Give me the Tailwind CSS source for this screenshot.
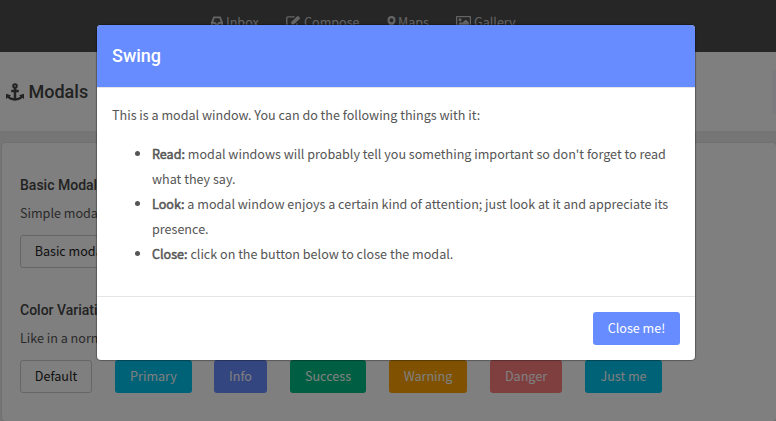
<!DOCTYPE html>
<html lang="en">
<head>
<meta charset="utf-8">
<title>Modals</title>
<script src="https://cdn.jsdelivr.net/npm/@tailwindcss/browser@4"></script>
</head>
<body class="relative h-[421px] w-[776px] overflow-hidden bg-[#ebebeb] font-['Noto_Sans_CJK_SC',sans-serif] text-[12.58px] leading-[25px] text-[#555]">
<nav class="flex h-[52px] bg-[#4c4c4c] pl-[211px] pt-[9px] text-white/70">
  <a class="flex w-[75px] gap-[3px]"><svg class="mt-[6px] h-[13px] w-[12px]" viewBox="0 0 13 13" fill="none" stroke="currentColor" stroke-width="2"><path d="M1 8 3.2 2h6.6L12 8v3.5H1V8h3.2l1 1.8h2.6l1-1.8H12"/></svg>Inbox</a>
  <a class="flex w-[101px] gap-[3px]"><svg class="mt-[6px] h-[13px] w-[15px]" viewBox="0 0 15 13" fill="none" stroke="currentColor" stroke-width="1.3"><path d="M8.5 1.8H2Q.8 1.8.8 3v8q0 1.2 1.2 1.2h7.5q1.2 0 1.2-1.2V8.5"/><path d="M5.2 9.6V7l6.6-6.3 2.5 2.5L7.8 9.6z" fill="currentColor" stroke="none"/></svg>Compose</a>
  <a class="flex w-[69px] gap-[2px]"><svg class="mt-[7px] h-[13px] w-[9px]" viewBox="0 0 9 13" fill="currentColor"><path fill-rule="evenodd" d="M4.5 0A4 4 0 0 0 .5 4c0 2 1 3 4 9 3-6 4-7 4-9a4 4 0 0 0-4-4m0 2.2a2 2 0 1 1 0 4 2 2 0 0 1 0-4"/></svg>Maps</a>
  <a class="flex gap-[3px]"><svg class="mt-[7px] h-[12px] w-[15px]" viewBox="0 0 15 12" fill="currentColor"><path fill-rule="evenodd" d="M1 0h13q1 0 1 1v10q0 1-1 1H1q-1 0-1-1V1q0-1 1-1m.2 1.2v9.6h12.6V1.2z"/><circle cx="4" cy="3.8" r="1.5"/><path d="M2.4 9.8V8l2.3-2.2L6 7l3.8-3.6 3 3v3.4z"/></svg>Gallery</a>
</nav>
<header class="flex h-[79px] items-center justify-between bg-white">
  <h1 class="ml-[6px] flex items-center gap-[4.5px] font-[Roboto,sans-serif] text-[18px] font-medium text-[#444]"><svg class="h-[18px] w-[18px]" viewBox="0 0 18 18" fill="none" stroke="currentColor" stroke-width="2.5"><circle cx="9" cy="3" r="1.8" stroke-width="2"/><path d="M9 5v11M5.2 8h7.6M2 13c1.2 2.4 3.5 3.4 7 3.4s5.8-1 7-3.4"/><path d="M0 10.8v5.2l5-3.8zM18 10.8v5.2l-5-3.8z" fill="currentColor" stroke="none"/></svg>Modals</h1>
  <div class="h-[46px] w-[4px] rounded-l bg-[#f6f5fb]"></div>
</header>
<main class="ml-[2px] mt-[12px] h-[278px] rounded-[3px] bg-white pl-[18px] pt-[30px] shadow-[0_0_1px_#999]">
  <h2 class="font-[Roboto,sans-serif] text-[14px] font-medium text-[#444]">Basic Modals</h2>
  <p class="mt-[2px]">Simple modals, no fancy colors</p>
  <button class="mt-[10px] block h-[33px] w-[101px] rounded-[3px] border border-[#ccc] pb-[2px] text-[#222]">Basic modal</button>
  <h2 class="mt-[30px] font-[Roboto,sans-serif] text-[14px] font-medium text-[#444]">Color Variations</h2>
  <p class="mt-[2px]">Like in a normal page</p>
  <div class="mt-[10px] flex h-[33px] text-white">
    <button class="mr-[23px] w-[72px] rounded-[3px] border border-[#ccc] pb-[2px] text-[#222]">Default</button>
    <button class="mr-[22px] w-[77px] rounded-[3px] bg-[#00c4ee] pb-[2px]">Primary</button>
    <button class="mr-[23px] w-[53px] rounded-[3px] bg-[#678cff] pb-[2px]">Info</button>
    <button class="mr-[23px] w-[76px] rounded-[3px] bg-[#00bf86] pb-[2px]">Success</button>
    <button class="mr-[23px] w-[78px] rounded-[3px] bg-[#ffa200] pb-[2px]">Warning</button>
    <button class="mr-[23px] w-[72px] rounded-[3px] bg-[#ff7e7e] pb-[2px]">Danger</button>
    <button class="w-[77px] rounded-[3px] bg-[#00c4ee] pb-[2px]">Just me</button>
  </div>
</main>
<div class="absolute inset-0 bg-black/50 pl-[97px] pt-[25px]">
  <section class="flex h-[335px] w-[598px] flex-col overflow-hidden rounded-[4px] bg-white shadow-[0_0_1px_1px_rgba(0,0,0,0.3)]">
    <div class="flex h-[62px] items-center bg-[#678cff] pb-[1px] pl-[15px] font-[Roboto,sans-serif] text-[18px] font-medium text-white">Swing</div>
    <div class="h-[210px] border-y border-[#e5e5e5] px-[15px] pt-[14px]">
      <p>This is a modal window. You can do the following things with it:</p>
      <ul class="mt-[14px] list-disc pl-[40px]">
        <li><b class="font-normal [-webkit-text-stroke:0.5px_#555]">Read:</b> modal windows will probably tell you something important so don't forget to read what they say.</li>
        <li><b class="font-normal [-webkit-text-stroke:0.5px_#555]">Look:</b> a modal window enjoys a certain kind of attention; just look at it and appreciate its presence.</li>
        <li><b class="font-normal [-webkit-text-stroke:0.5px_#555]">Close:</b> click on the button below to close the modal.</li>
      </ul>
    </div>
    <div class="flex flex-1 justify-end pr-[15px] pt-[15px]">
      <button class="h-[33px] w-[87px] rounded-[3px] bg-[#678cff] pb-[2px] text-white">Close me!</button>
    </div>
  </section>
</div>
</body>
</html>
